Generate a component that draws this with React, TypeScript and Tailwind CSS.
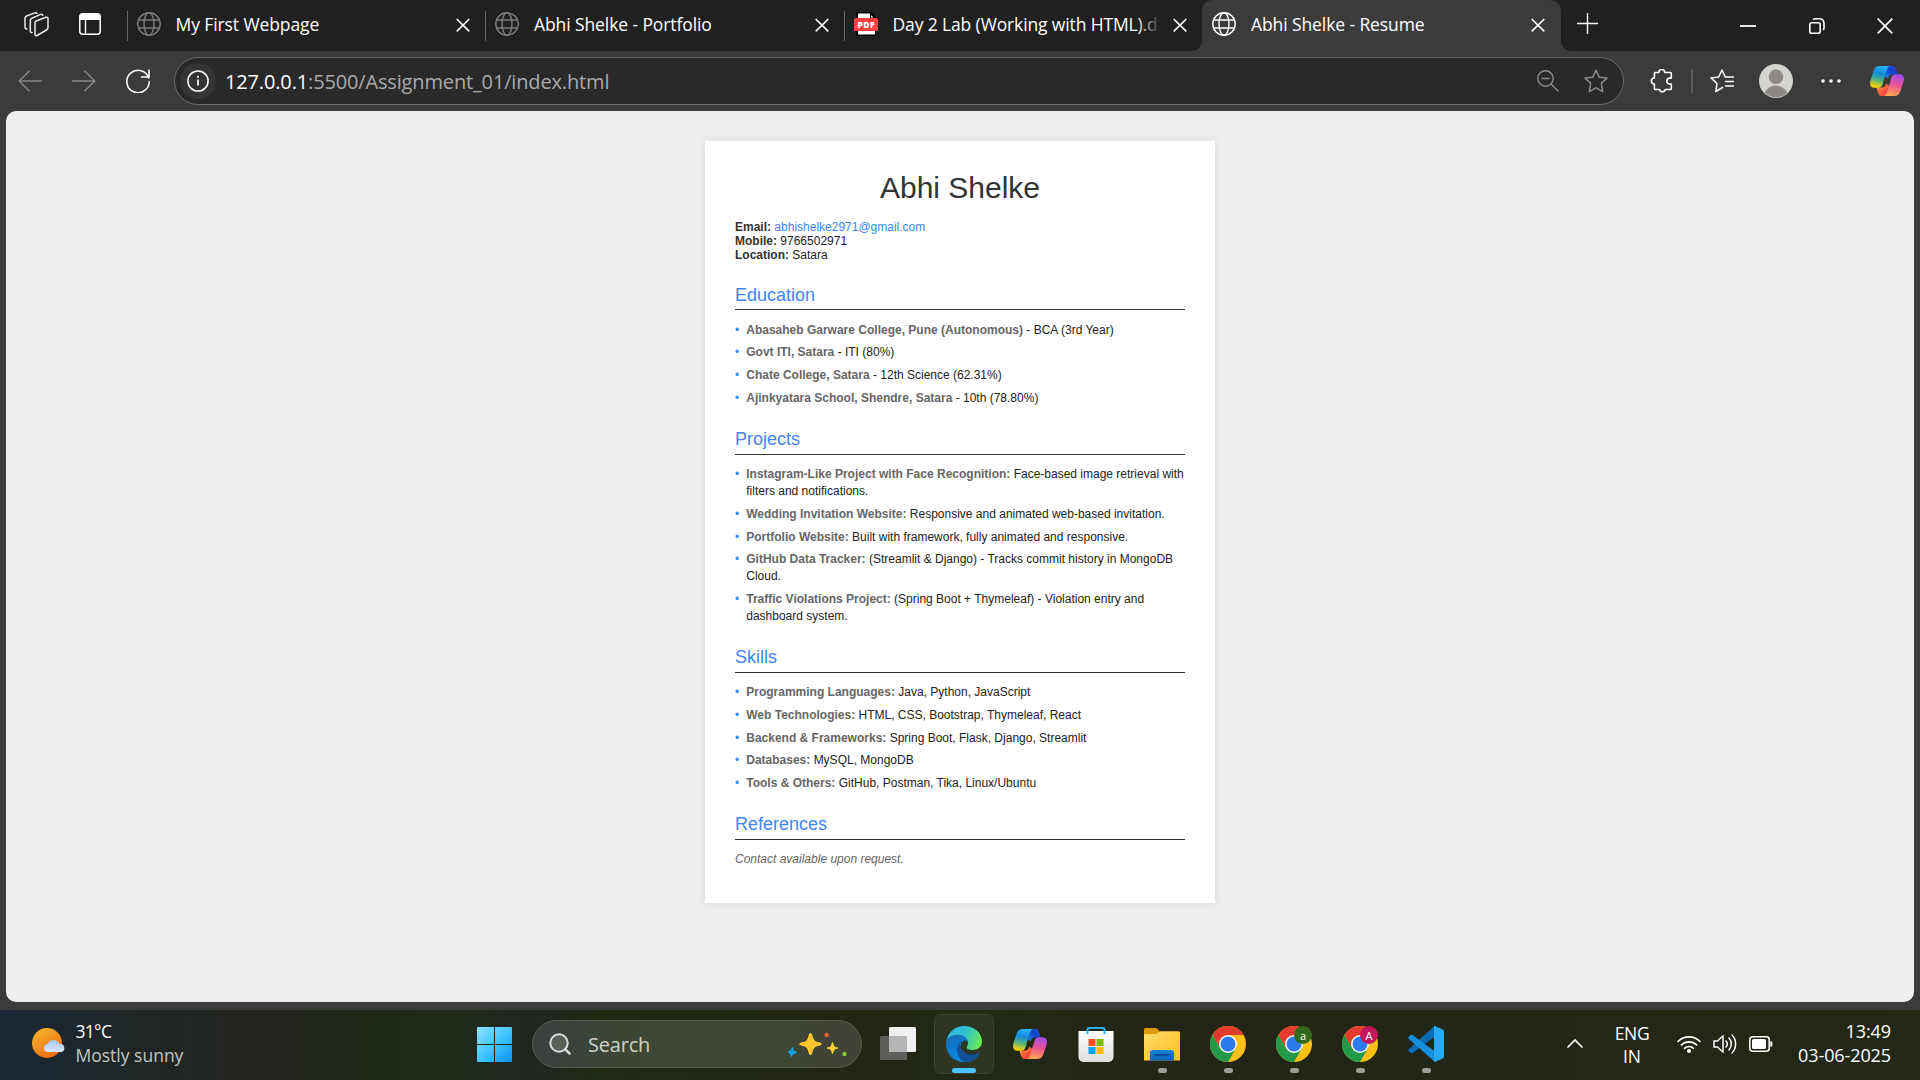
import React from "react";

type IconProps = { className?: string };

const Globe = ({ className = "" }: IconProps) => (
  <svg viewBox="0 0 24 24" className={`h-6 w-6 shrink-0 ${className}`} fill="none" stroke="currentColor" strokeWidth="1.4">
    <circle cx="12" cy="12" r="11.2" />
    <ellipse cx="12" cy="12" rx="5" ry="11.2" />
    <path d="M1.8 8h20.4M1.8 16h20.4" />
  </svg>
);

const Cross = ({ className = "" }: IconProps) => (
  <svg viewBox="0 0 14 14" className={`h-3.5 w-3.5 shrink-0 ${className}`} fill="none" stroke="currentColor" strokeWidth="1.6">
    <path d="M.7 1l12.6 12.4M13.3 1L.7 13.4" />
  </svg>
);

const Pdf = () => (
  <svg viewBox="0 0 24 24" className="h-6 w-6 shrink-0">
    <path d="M2 0h15l5 5v19H2z" fill="#000" />
    <path d="M4 1.5h12v5h5V22.500H4z" fill="#fff" />
    <path d="M17 3l2.500 2.500H17z" fill="#fff" />
    <path d="M0 7h1v-1h22v1h1v12H0z" fill="#ff4040" />
    <text x="12" y="16" textAnchor="middle" fontFamily="Open Sans, sans-serif" fontWeight="800" fontSize="8.500" fill="#fff" textLength="17">PDF</text>
  </svg>
);

const Copilot = ({ id, className = "" }: IconProps & { id: string }) => (
  <svg viewBox="0 0 34 30" className={`h-[30px] w-[34px] shrink-0 ${className}`}>
    <defs>
      <linearGradient id={`${id}a`} x1=".6" y1="0" x2=".4" y2="1">
        <stop offset="0" stopColor="#2bb4f3" />
        <stop offset=".35" stopColor="#1389dd" />
        <stop offset=".65" stopColor="#4fb283" />
        <stop offset="1" stopColor="#ffd400" />
      </linearGradient>
      <linearGradient id={`${id}b`} x1=".6" y1="0" x2=".4" y2="1">
        <stop offset="0" stopColor="#a04be8" />
        <stop offset=".45" stopColor="#e9529a" />
        <stop offset="1" stopColor="#ffa54d" />
      </linearGradient>
      <linearGradient id={`${id}c`} x1="0" y1="1" x2="1" y2="0">
        <stop offset="0" stopColor="#1b8fe8" />
        <stop offset=".6" stopColor="#1340cc" />
        <stop offset="1" stopColor="#2257d8" />
      </linearGradient>
      <linearGradient id={`${id}d`} x1="0" y1="0" x2="1" y2="1">
        <stop offset="0" stopColor="#ffb13b" />
        <stop offset=".6" stopColor="#f4513f" />
        <stop offset="1" stopColor="#e83a4c" />
      </linearGradient>
    </defs>
    <path d="M16 0h6c3 0 3.600 2 4.400 4.500l1.300 4h-5.200c-3 0-4 1.500-4.700 4L13.500 9z" fill={`url(#${id}c)`} />
    <path d="M18 30h-6c-3 0-3.600-2-4.400-4.500l-1.300-4h5.200c3 0 4-1.500 4.700-4L20.500 21z" fill={`url(#${id}d)`} />
    <path d="M10 0h10.500c-2.500.3-3.300 2.500-4.200 5.500L12.800 17.500c-.9 3-2.300 4.200-5 4.200H4.500C.5 21.700-.7 18.500.4 14.500L3.700 4.500C4.800 1.300 6.800 0 10 0z" fill={`url(#${id}a)`} />
    <path d="M24 30H13.500c2.500-.3 3.300-2.500 4.200-5.500l3.500-12c.9-3 2.300-4.200 5-4.200h3.300c4 0 5.200 3.200 4.100 7.200l-3.300 10C29.200 28.700 27.200 30 24 30z" fill={`url(#${id}b)`} />
  </svg>
);

const Edge = () => (
  <svg viewBox="0 0 36 36" className="h-9 w-9">
    <defs>
      <linearGradient id="edTop" x1="0" y1=".3" x2="1" y2=".6">
        <stop offset="0" stopColor="#2fb4e8" />
        <stop offset=".5" stopColor="#31c5cd" />
        <stop offset="1" stopColor="#6be84f" />
      </linearGradient>
      <linearGradient id="edLeft" x1="0" y1="0" x2=".4" y2="1">
        <stop offset="0" stopColor="#1a6fb0" />
        <stop offset=".5" stopColor="#0b7ad6" />
        <stop offset="1" stopColor="#0a8be4" />
      </linearGradient>
    </defs>
    <path d="M.3 16C1.500 6.500 9 0 18 0c10.500 0 18 7 18 15.500 0 5-4 8.500-9 8.500-4 0-6.300-1.300-6.300-2.600 0-1 1.300-1.600 1.300-4.400C22 12 17 9 12 9 6 9 2 12 .3 16z" fill="url(#edTop)" />
    <path d="M0 18C0 12.500 5 8.800 11.500 8.800 18 8.800 22 12.500 22 17c-1-2.500-3-2.800-4.500-2-5 2.500-4 14 5 17 3 1 6 .7 8 0C27 35 22.500 36 18 36 8 36 0 28 0 18z" fill="url(#edLeft)" />
    <path d="M17 14.800c-3.500 1.200-6 4.700-6 9C11 30 15 36 20.500 36 27 36 31.500 32 33.600 28c.5-1-.2-1.600-1.200-1.100-2 1-4.200 1.600-6.900 1.600-6.500 0-11.500-4.500-11.500-9.700 0-1.600 1.200-3.300 3-4z" fill="#124f96" />
  </svg>
);

const Store = () => (
  <svg viewBox="0 0 36 36" className="h-9 w-9">
    <defs>
      <linearGradient id="st" x1="0" y1="0" x2="0" y2="1">
        <stop offset="0" stopColor="#ffffff" />
        <stop offset="1" stopColor="#dedede" />
      </linearGradient>
    </defs>
    <path d="M.5 5h35v26a5 5 0 0 1-5 5h-25a5 5 0 0 1-5-5z" fill="url(#st)" />
    <path d="M9.500 8V3.500q0-1.500 1.500-1.500h14q1.500 0 1.500 1.500V8" fill="none" stroke="#2bb0ee" strokeWidth="2" />
    <path d="M10.500 13h7v7h-7z" fill="#f25022" />
    <path d="M18.500 13h7v7h-7z" fill="#7fba00" />
    <path d="M10.500 21h7v7h-7z" fill="#00a4ef" />
    <path d="M18.500 21h7v7h-7z" fill="#ffb900" />
  </svg>
);

const Folder = () => (
  <svg viewBox="0 0 36 36" className="h-9 w-9">
    <defs>
      <linearGradient id="fo" x1="0" y1="0" x2="1" y2="1">
        <stop offset="0" stopColor="#ffdc6b" />
        <stop offset="1" stopColor="#ffbe1f" />
      </linearGradient>
      <linearGradient id="fb" x1="0" y1="0" x2="0" y2="1">
        <stop offset="0" stopColor="#1583d6" />
        <stop offset="1" stopColor="#0a64b8" />
      </linearGradient>
    </defs>
    <path d="M0 3.500Q0 2 1.500 2H11q1.500 0 2.500 1l2 2v5H0z" fill="#dd9b0b" />
    <path d="M0 8h11.500q1.500 0 3-1.500L16 5.200h18.500q1.500 0 1.500 1.500V34.500H0z" fill="url(#fo)" />
    <path d="M6 34.500V27q0-3 3-3h18q3 0 3 3v7.500z" fill="url(#fb)" />
    <path d="M11 29h14" stroke="#0a4f95" strokeWidth="2" strokeLinecap="round" />
  </svg>
);

const Chrome = () => (
  <svg viewBox="0 0 36 36" className="h-9 w-9">
    <circle cx="18" cy="18" r="18" fill="#fbc116" />
    <path d="M2.410 9A18 18 0 0 1 33.590 9H18L10.200 22.500z" fill="#e33b2e" />
    <path d="M2.410 9A18 18 0 0 0 18 36L25.800 22.500 18 22 10.200 22.500z" fill="#229a48" />
    <circle cx="18" cy="18" r="9" fill="#fff" />
    <circle cx="18" cy="18" r="7.500" fill="#2b7bea" />
  </svg>
);

const VsCode = () => (
  <svg viewBox="0 0 36 36" className="h-9 w-9">
    <path d="M26.500 0L.6 23.200q-.8.900 0 1.800L2.700 27q.9.700 1.900 0L27 10.500z" fill="#0b6cb5" />
    <path d="M.6 12.800q-.8-.9 0-1.800L2.700 9q.9-.7 1.900 0L27 25.500V36z" fill="#1490dc" />
    <path d="M26 0q.4-.2 1 .1l7.700 3.500q1.300.6 1.300 2v24.800q0 1.400-1.300 2L27 35.900q-.6.300-1 .1z" fill="#27a9f2" />
  </svg>
);

const Tab = ({ title, icon, active = false, fade = false, tracking }: { title: string; icon: React.ReactNode; active?: boolean; fade?: boolean; tracking: string }) => (
  <div
    className={
      active
        ? "relative flex h-[51px] w-[359px] items-center rounded-t-[10px] bg-[#3b3b3b] pr-4 pb-[3px] pl-[10px]"
        : "flex h-12 w-[358.5px] items-center pr-[15px]"
    }
  >
    {active && (
      <>
        <svg viewBox="0 0 10 10" className="absolute bottom-0 -left-[10px] h-[10px] w-[10px]"><path d="M10 0v10H0A10 10 0 0 0 10 0z" fill="#3b3b3b" /></svg>
        <svg viewBox="0 0 10 10" className="absolute -right-[10px] bottom-0 h-[10px] w-[10px]"><path d="M0 0v10h10A10 10 0 0 1 0 0z" fill="#3b3b3b" /></svg>
      </>
    )}
    {!active && <div className="mt-1 mr-[9px] h-[30px] w-px bg-[#666]" />}
    {icon}
    <div className={`relative mb-px ml-[15px] w-[268px] whitespace-nowrap text-[17.5px] leading-6 text-white ${tracking}`}>
      {title}
      {fade && <div className="absolute inset-y-0 right-0 w-6 bg-gradient-to-r from-transparent to-[#202020]" />}
    </div>
    <Cross className="mt-px ml-auto text-white" />
  </div>
);

const TabBar = () => (
  <div className="flex h-[51px] bg-[#202020] text-white">
    <div className="flex h-12 w-[126.500px] items-center pl-6">
      <svg viewBox="0 0 25 25" className="h-[25px] w-[25px]" fill="none" stroke="#e8e8e8" strokeWidth="1.500" strokeLinejoin="round" strokeLinecap="round">
        <path d="M11.500 9.300l10.500-4q2-.6 2 1.300v9q0 1.700-1.500 2.400L13 23.500q-1.700.7-2-1V11.200q0-1.300.5-1.900z" />
        <path d="M8 20.500q-1.500.3-1.700-1.300V8.500q0-1.500 1.500-2.200l9-3.900q1.500-.5 2 .9" />
        <path d="M3 17Q1 17 1 15V6.200Q1 4.700 2.500 4L11 .9q1.500-.5 2 .6" />
      </svg>
      <svg viewBox="0 0 22 22" className="ml-[30px] h-[22px] w-[22px]">
        <rect x=".8" y=".8" width="20.400" height="20.400" rx="3" fill="none" stroke="#fff" strokeWidth="1.500" />
        <path d="M1 7V3q0-2 2-2h16q2 0 2 2v4z" fill="#fff" />
        <path d="M6.500 6v15" stroke="#fff" strokeWidth="1.400" />
      </svg>
    </div>
    <Tab title="My First Webpage" icon={<Globe className="text-[#7b7b7b]" />} tracking="tracking-[-0.1px]" />
    <Tab title="Abhi Shelke - Portfolio" icon={<Globe className="text-[#7b7b7b]" />} tracking="tracking-[-0.1px]" />
    <Tab title="Day 2 Lab (Working with HTML).d" icon={<Pdf />} tracking="tracking-[-0.13px]" fade />
    <Tab title="Abhi Shelke - Resume" icon={<Globe className="text-white" />} tracking="tracking-[-0.1px]" active />
    <div className="flex h-12 flex-1 items-center pr-[27px] pl-[16px]">
      <svg viewBox="0 0 21 21" className="-mt-0.5 h-[21px] w-[21px]" stroke="#fff" strokeWidth="1.400"><path d="M10.500 0v21M0 10.500h21" /></svg>
      <svg viewBox="0 0 16 16" className="mt-[3px] ml-auto h-4 w-4" stroke="#fff" strokeWidth="1.800"><path d="M0 8h16" /></svg>
      <svg viewBox="0 0 16 16" className="mt-[3px] ml-[52.500px] h-4 w-4" fill="none" stroke="#fff" strokeWidth="1.600">
        <rect x=".8" y="4.800" width="10.400" height="10.400" rx="2" />
        <path d="M4 1.500Q5 .8 6.500.8H10q5 0 5 5v3.700q0 1.500-.8 2.500" />
      </svg>
      <svg viewBox="0 0 16 16" className="mt-[3px] ml-[52.500px] h-4 w-4" stroke="#fff" strokeWidth="1.700"><path d="M.7.7l14.600 14.600M15.300.7L.7 15.300" /></svg>
    </div>
  </div>
);

const AddressRow = () => (
  <div className="flex h-[60px] items-center bg-[#3b3b3b] pr-4 pl-[18px]">
    <svg viewBox="0 0 24 22" className="h-[22px] w-6" fill="none" stroke="#868686" strokeWidth="1.500"><path d="M24 11H1.200M11.500.7L1.200 11l10.300 10.300" /></svg>
    <svg viewBox="0 0 24 22" className="ml-[30px] h-[22px] w-6" fill="none" stroke="#868686" strokeWidth="1.500"><path d="M0 11h22.800M12.500.7L22.800 11 12.500 21.300" /></svg>
    <svg viewBox="0 0 24 24" className="ml-[30px] h-6 w-6" fill="none" stroke="#fff" strokeWidth="1.600"><path d="M22.800 9.500A11.200 11.200 0 1 0 23.200 12M23 .5v7.500h-8" /></svg>
    <div className="ml-6 flex h-12 w-[1450px] items-center rounded-full border border-[#6a6a6a] bg-[#292929] pr-[15px] pl-[5px]">
      <div className="flex h-9 w-9 items-center justify-center rounded-full bg-[#343434]">
        <svg viewBox="0 0 22 22" className="h-[22px] w-[22px]" fill="none" stroke="#fff" strokeWidth="1.500">
          <circle cx="11" cy="11" r="10.100" />
          <path d="M11 9.500v6" strokeWidth="1.700" />
          <circle cx="11" cy="6.800" r="1.100" fill="#fff" stroke="none" />
        </svg>
      </div>
      <div className="mt-px ml-[9px] whitespace-nowrap text-[20px] leading-7 tracking-[-0.15px] text-[#a9a9a9]">
        <span className="text-white">127.0.0.1</span>:5500/Assignment_01/index.html
      </div>
      <svg viewBox="0 0 22 22" className="ml-auto h-[22px] w-[22px]" fill="none" stroke="#8d8d8d" strokeWidth="1.400"><circle cx="8.500" cy="8.500" r="7.700" /><path d="M14 14l7.500 7.500M4.500 8.500h8" /></svg>
      <svg viewBox="0 0 24 24" className="ml-[25px] h-6 w-6" fill="none" stroke="#8d8d8d" strokeWidth="1.500" strokeLinejoin="round"><path d="M12 1.200l3.300 7 7.700.9-5.700 5.300 1.500 8.200L12 18.800l-6.800 3.800 1.500-8.200L1 9.100l7.700-.9z" /></svg>
    </div>
    <svg viewBox="0 0 24 24" className="ml-[26px] h-6 w-6" fill="none" stroke="#fff" strokeWidth="1.600" strokeLinejoin="round">
      <path d="M4.500 3.500h4.300a3 3 0 0 1 6 0h5.700q.8 0 .8.800v4.800h-1.500a3 3 0 0 0 0 6h1.500v4.600q0 .8-.8.800h-5.200a3 3 0 0 1-5.800 0H5.200q-.8 0-.8-.8V15a3 3 0 0 1 0-6V4.300q0-.8.8-.8" />
    </svg>
    <div className="ml-[17px] h-6 w-0.5 bg-[#5c5c5c]" />
    <svg viewBox="0 0 24 24" className="ml-[17px] h-6 w-6" fill="none" stroke="#fff" strokeWidth="1.500" strokeLinejoin="round" strokeLinecap="round">
      <path d="M12.500 18.500L5.800 22.500 7 14.500 1 9l7.700-1L12 1l3.200 7M15.500 8h8M15.500 12.500h8M15.500 17h8" />
    </svg>
    <svg viewBox="0 0 34 34" className="ml-[25px] h-[34px] w-[34px]">
      <clipPath id="av"><circle cx="17" cy="17" r="16.200" /></clipPath>
      <circle cx="17" cy="17" r="17" fill="#d5d3cf" />
      <circle cx="17" cy="12.800" r="7.200" fill="#8c8884" />
      <circle cx="17" cy="34" r="12.500" fill="#8c8884" clipPath="url(#av)" />
    </svg>
    <svg viewBox="0 0 20 4" className="ml-[28px] h-1 w-5" fill="#fff"><circle cx="2" cy="2" r="1.800" /><circle cx="10" cy="2" r="1.800" /><circle cx="18" cy="2" r="1.800" /></svg>
    <Copilot id="tb" className="ml-auto" />
  </div>
);

type Entry = [string, string];

const Section = ({ title, items, children }: { title: string; items?: Entry[]; children?: React.ReactNode }) => (
  <section className="mb-[22.350px]">
    <h2 className="mb-[11.250px] border-b border-[#333] pb-[3.750px] text-[18px] leading-[21px] text-[#4285f4]">{title}</h2>
    {items && (
      <ul>
        {items.map(([label, text]) => (
          <li key={label} className="mb-[6px] flex text-[12px] leading-[16.800px]">
            <span className="w-[11.250px] shrink-0 text-[#4285f4]">•</span>
            <span><b className="text-[#666]">{label}</b> {text}</span>
          </li>
        ))}
      </ul>
    )}
    {children}
  </section>
);

const education: Entry[] = [
  ["Abasaheb Garware College, Pune (Autonomous)", "- BCA (3rd Year)"],
  ["Govt ITI, Satara", "- ITI (80%)"],
  ["Chate College, Satara", "- 12th Science (62.31%)"],
  ["Ajinkyatara School, Shendre, Satara", "- 10th (78.80%)"],
];
const projects: Entry[] = [
  ["Instagram-Like Project with Face Recognition:", "Face-based image retrieval with filters and notifications."],
  ["Wedding Invitation Website:", "Responsive and animated web-based invitation."],
  ["Portfolio Website:", "Built with framework, fully animated and responsive."],
  ["GitHub Data Tracker:", "(Streamlit & Django) - Tracks commit history in MongoDB Cloud."],
  ["Traffic Violations Project:", "(Spring Boot + Thymeleaf) - Violation entry and dashboard system."],
];
const skills: Entry[] = [
  ["Programming Languages:", "Java, Python, JavaScript"],
  ["Web Technologies:", "HTML, CSS, Bootstrap, Thymeleaf, React"],
  ["Backend & Frameworks:", "Spring Boot, Flask, Django, Streamlit"],
  ["Databases:", "MySQL, MongoDB"],
  ["Tools & Others:", "GitHub, Postman, Tika, Linux/Ubuntu"],
];

const Resume = () => (
  <article className="mt-[30px] h-[762px] w-[510px] bg-white px-[30px] pt-[30px] font-['Liberation_Sans',Arial,sans-serif] text-[12px] text-[#222] shadow-[0_0_8px_rgba(0,0,0,0.1)]">
    <h1 className="text-center text-[30px] leading-[34px] text-[#333]">Abhi Shelke</h1>
    <div className="mt-[15px] mb-[22.700px] leading-[14px]">
      <p><b className="text-[#333]">Email:</b> <span className="text-[#4285f4]">abhishelke2971@gmail.com</span></p>
      <p><b className="text-[#333]">Mobile:</b> 9766502971</p>
      <p><b className="text-[#333]">Location:</b> Satara</p>
    </div>
    <Section title="Education" items={education} />
    <Section title="Projects" items={projects} />
    <Section title="Skills" items={skills} />
    <Section title="References">
      <p className="leading-[17px] text-[#666] italic">Contact available upon request.</p>
    </Section>
  </article>
);

const TaskItem = ({ children, active = false, running = false, badge, badgeColor = "" }: { children: React.ReactNode; active?: boolean; running?: boolean; badge?: string; badgeColor?: string }) => (
  <div className={`relative mr-1.5 flex h-[60px] w-[60px] items-center justify-center rounded-md border ${active ? "border-[#3a4230] bg-[#2e3524]" : "border-transparent"}`}>
    {children}
    {badge && <span className={`absolute top-[11px] left-[29px] flex h-[18px] w-[18px] items-center justify-center rounded-full text-[11px] leading-none text-white ${badgeColor}`}>{badge}</span>}
    {active && <span className="absolute bottom-0 left-[17px] h-[5px] w-6 rounded-full bg-[#4cc2ff]" />}
    {running && <span className="absolute bottom-0 left-[25px] h-[5px] w-[9px] rounded-full bg-[#9a9c96]" />}
  </div>
);

const Taskbar = () => (
  <div className="flex h-[71px] border-t border-[#3a4038] bg-[linear-gradient(90deg,#1b2735_0px,#1f2626_130px,#23241f_260px,#1e2818_380px,#1f2a1a_460px,#212521_530px,#1f2916_600px,#232515_860px,#212916_960px,#232616_1100px,#222716_1920px)] text-white">
    <div className="flex w-[464px] items-start pt-[9px] pl-8">
      <svg viewBox="0 0 34 32" className="mt-2 h-8 w-[34px]">
        <defs>
          <linearGradient id="sun" x1="0" y1="0" x2=".6" y2="1"><stop offset="0" stopColor="#f5bd2e" /><stop offset="1" stopColor="#ee6c12" /></linearGradient>
          <linearGradient id="cl" x1="0" y1="0" x2="0" y2="1"><stop offset="0" stopColor="#a9c8f8" /><stop offset="1" stopColor="#d9e7ff" /></linearGradient>
        </defs>
        <circle cx="15" cy="16" r="15" fill="url(#sun)" />
        <path d="M16 25a4 4 0 0 1 0-8 6.200 6.200 0 0 1 11.500 0A4 4 0 0 1 29 25z" fill="url(#cl)" />
      </svg>
      <div className="ml-[9.500px] text-[17.500px] leading-6">
        <div className="tracking-[-0.7px]">31°C</div>
        <div className="text-[#c3c6c3]">Mostly sunny</div>
      </div>
    </div>
    <div className="flex items-start pt-[4px]">
      <TaskItem>
        <svg viewBox="0 0 35 35" className="h-[35px] w-[35px]">
          <defs><linearGradient id="win" x1="0" y1="0" x2="1" y2="1" gradientUnits="objectBoundingBox"><stop offset="0" stopColor="#8ce2ff" /><stop offset=".5" stopColor="#43c6ff" /><stop offset="1" stopColor="#0793f5" /></linearGradient></defs>
          <path d="M1 0h16v17H0V1q0-1 1-1zM18 0h16q1 0 1 1v16H18zM0 18h17v17H1q-1 0-1-1zM18 18h17v16q0 1-1 1H18z" fill="url(#win)" />
        </svg>
      </TaskItem>
      <div className="mt-[6px] mr-[6px] ml-[2px] flex h-12 w-[330px] items-center rounded-full border border-[#555a4c] bg-[linear-gradient(90deg,#3c4040,#3d4733_35%,#3d4733_70%,#414238)] pl-[16px]">
        <svg viewBox="0 0 22 22" className="h-[22px] w-[22px]" fill="#5b6058" stroke="#dadde0" strokeLinecap="round"><circle cx="10" cy="10" r="8.700" strokeWidth="2" /><path d="M16.300 16.300l4.200 4.200" strokeWidth="2.500" /></svg>
        <span className="mt-px ml-[17px] text-[20px] tracking-[-0.2px] text-[#cfd2cd]">Search</span>
        <svg viewBox="0 0 60 26" className="mr-[13px] ml-auto h-[26px] w-[60px]">
          <path d="M22.500 2q1.500 0 2 2.500c1 4.500 2 5.800 6.500 6.800 3.500.8 3.500 2.600 0 3.400-4.500 1-5.500 2.300-6.500 6.800q-.5 2.500-2 2.500t-2-2.500c-1-4.500-2-5.800-6.500-6.800-3.500-.8-3.500-2.600 0-3.400 4.500-1 5.500-2.300 6.500-6.800q.5-2.500 2-2.500z" fill="#ffc52e" />
          <path d="M44.500 11.500c1 4 2 5 5.500 5.500-3.500.7-4.500 1.700-5.500 5.500-1-3.800-2-4.800-5.500-5.500 3.500-.5 4.500-1.500 5.500-5.500z" fill="#ffd43b" stroke="#ffd43b" strokeLinejoin="round" />
          <path d="M4.500 17c0 3 .5 3.500 3.500 4.500-3 .5-3.500 1-4.500 3.500 0-2.500-.5-3-3-4.500 2.500 0 3-.8 4-3.500z" fill="#12a5ee" stroke="#12a5ee" strokeWidth="1.500" strokeLinejoin="round" />
          <circle cx="38.500" cy="4" r="2.200" fill="#f2622c" />
          <circle cx="56.500" cy="23" r="2.200" fill="#8ac53e" />
        </svg>
      </div>
      <TaskItem>
        <svg viewBox="0 0 36 36" className="h-9 w-9">
          <rect x="0" y="10" width="27" height="24" rx="1.500" fill="#5f605c" />
          <rect x="9" y="1" width="27" height="25" rx="1.500" fill="#f0f0f0" />
          <path d="M9 10h16.500q1.500 0 1.500 1.500V26H9z" fill="#b5b5b5" />
        </svg>
      </TaskItem>
      <TaskItem active><Edge /></TaskItem>
      <TaskItem><Copilot id="tk" /></TaskItem>
      <TaskItem><Store /></TaskItem>
      <TaskItem running><Folder /></TaskItem>
      <TaskItem running><Chrome /></TaskItem>
      <TaskItem running badge="a" badgeColor="bg-[#33691e]"><Chrome /></TaskItem>
      <TaskItem running badge="A" badgeColor="bg-[#c2185b]"><Chrome /></TaskItem>
      <TaskItem running><VsCode /></TaskItem>
    </div>
    <div className="ml-auto flex items-start pr-[29px] text-[17px] leading-6">
      <svg viewBox="0 0 16 9" className="mt-[29px] h-[9px] w-4" fill="none" stroke="#fff" strokeWidth="1.700" strokeLinecap="round"><path d="M1 8l7-7 7 7" /></svg>
      <div className="mt-[12px] ml-[30px] w-[38px] text-center text-[17.500px] leading-[23px]"><div className="tracking-[-0.3px]">ENG</div><div>IN</div></div>
      <svg viewBox="0 0 24 20" className="mt-[24px] ml-[26px] h-5 w-6" fill="none" stroke="#fff" strokeWidth="1.600" strokeLinecap="round">
        <path d="M1 7.500a15.500 15.500 0 0 1 22 0M4.300 11a11 11 0 0 1 15.400 0M7.500 14.300a6.500 6.500 0 0 1 9 0" />
        <circle cx="12" cy="17" r="2" fill="#fff" stroke="none" />
      </svg>
      <svg viewBox="0 0 24 20" className="mt-[24px] ml-3 h-5 w-6" fill="none" stroke="#fff" strokeWidth="1.500" strokeLinecap="round" strokeLinejoin="round">
        <path d="M1 7h3.500L10 1.800v16.400L4.500 13H1zM13 7a4.500 4.500 0 0 1 0 6M16 4a9 9 0 0 1 0 12M19 1a13 13 0 0 1 0 18" />
      </svg>
      <svg viewBox="0 0 24 16" className="mt-[26px] ml-3 h-4 w-6" fill="none" stroke="#fff" strokeWidth="1.500">
        <rect x=".8" y=".8" width="19.400" height="14.400" rx="3" />
        <rect x="3" y="3" width="14" height="10" rx="1.500" fill="#fff" stroke="none" />
        <path d="M22.300 5.500v5" strokeWidth="2" />
      </svg>
      <div className="mt-[9px] ml-[21px] w-[97px] text-right text-[18px] tracking-[-0.1px] whitespace-nowrap"><div>13:49</div><div>03-06-2025</div></div>
    </div>
  </div>
);

export default function App() {
  return (
    <div className="flex h-[1080px] w-[1920px] flex-col overflow-hidden bg-[#3b3b3b] font-['Open_Sans','Noto_Sans',sans-serif]">
      <TabBar />
      <AddressRow />
      <main className="mx-[6px] mb-[7px] flex h-[891px] justify-center rounded-[10px] bg-[#efefef]">
        <Resume />
      </main>
      <Taskbar />
    </div>
  );
}
